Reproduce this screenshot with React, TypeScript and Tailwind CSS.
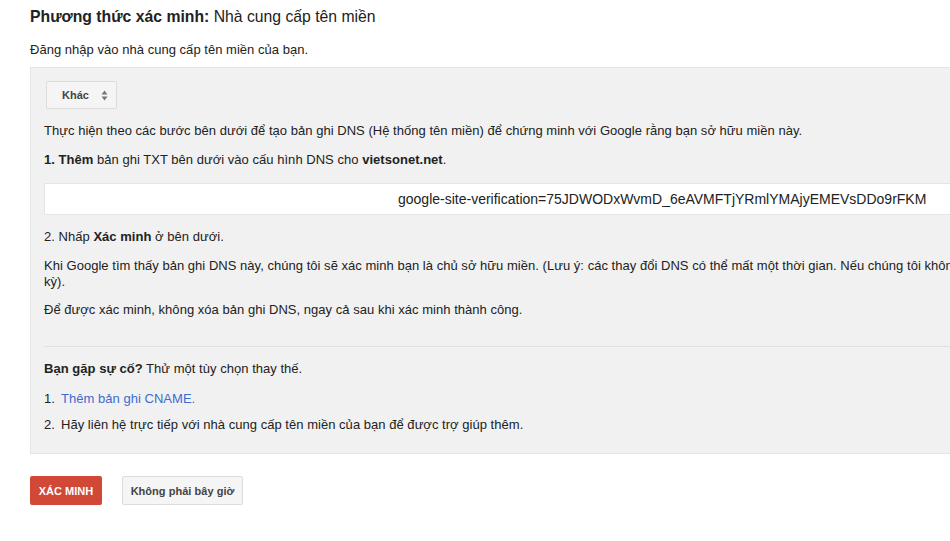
import React from "react";

export default function App() {
  return (
    <div
      className="w-[950px] h-[541px] overflow-hidden bg-white text-[13px] leading-[16px] text-[#222] tracking-[0.03px]"
      style={{ fontFamily: '"Liberation Sans", Arial, sans-serif' }}
    >
      <div className="pl-[30px] pt-[7px] text-[15.75px] leading-[19px] tracking-normal">
        <span className="font-bold">Phương thức xác minh:</span> Nhà cung cấp tên miền
      </div>
      <div className="pl-[30px] pt-[16px]">Đăng nhập vào nhà cung cấp tên miền của bạn.</div>
      <div className="ml-[30px] mt-[9px] w-[1000px] border border-[#e5e5e5] bg-[#f1f1f1] pl-[13px] pt-[13px] pb-[20px]">
        <div className="ml-[2px] flex h-[28px] w-[71px] items-center justify-between rounded-[2px] border border-[#dcdcdc] bg-[#f5f5f5] pl-[15px] pr-[8px] text-[11px] font-bold text-[#444]">
          <span>Khác</span>
          <svg width="7" height="11" viewBox="0 0 7 11">
            <path d="M3.5 0.5 L6.5 4.5 L0.5 4.5 Z" fill="#777" />
            <path d="M3.5 10.5 L6.5 6.5 L0.5 6.5 Z" fill="#777" />
          </svg>
        </div>
        <div className="mt-[14px] whitespace-nowrap">
          Thực hiện theo các bước bên dưới để tạo bản ghi DNS (Hệ thống tên miền) để chứng minh với Google rằng bạn sở hữu miền này.
        </div>
        <div className="mt-[13px]">
          <span className="font-bold">1. Thêm</span> bản ghi TXT bên dưới vào cấu hình DNS cho <span className="font-bold">vietsonet.net</span>.
        </div>
        <div className="mt-[15px] flex h-[32px] w-[1200px] items-center border border-[#e5e5e5] bg-white pl-[353px] whitespace-nowrap text-[14px] tracking-normal">
          google-site-verification=75JDWODxWvmD_6eAVMFTjYRmlYMAjyEMEVsDDo9rFKM
        </div>
        <div className="mt-[14px]">
          2. Nhấp <span className="font-bold">Xác minh</span> ở bên dưới.
        </div>
        <div className="mt-[13px] whitespace-nowrap">
          Khi Google tìm thấy bản ghi DNS này, chúng tôi sẽ xác minh bạn là chủ sở hữu miền. (Lưu ý: các thay đổi DNS có thể mất một thời gian. Nếu chúng tôi không tìm thấy bản ghi ngay, chúng tôi sẽ kiểm tra định
          <br />
          kỳ).
        </div>
        <div className="mt-[12px]">Để được xác minh, không xóa bản ghi DNS, ngay cả sau khi xác minh thành công.</div>
        <div className="mt-[28px] h-px bg-[#e0e0e0]" />
        <div className="mt-[14px]">
          <span className="font-bold">Bạn gặp sự cố?</span> Thử một tùy chọn thay thế.
        </div>
        <div className="mt-[14px] flex">
          <span className="w-[17px]">1.</span>
          <span className="text-[#3d6ccf]">Thêm bản ghi CNAME.</span>
        </div>
        <div className="mt-[10px] flex">
          <span className="w-[17px]">2.</span>
          <span>Hãy liên hệ trực tiếp với nhà cung cấp tên miền của bạn để được trợ giúp thêm.</span>
        </div>
      </div>
      <div className="ml-[30px] mt-[22px] flex gap-[20px]">
        <div className="flex h-[29px] w-[72px] items-center justify-center rounded-[2px] bg-[#d14836] text-[11px] font-bold text-white">
          XÁC MINH
        </div>
        <div className="flex h-[29px] w-[121px] items-center justify-center rounded-[2px] border border-[#dcdcdc] bg-[#f5f5f5] text-[11px] font-bold text-[#444]">
          Không phải bây giờ
        </div>
      </div>
    </div>
  );
}
